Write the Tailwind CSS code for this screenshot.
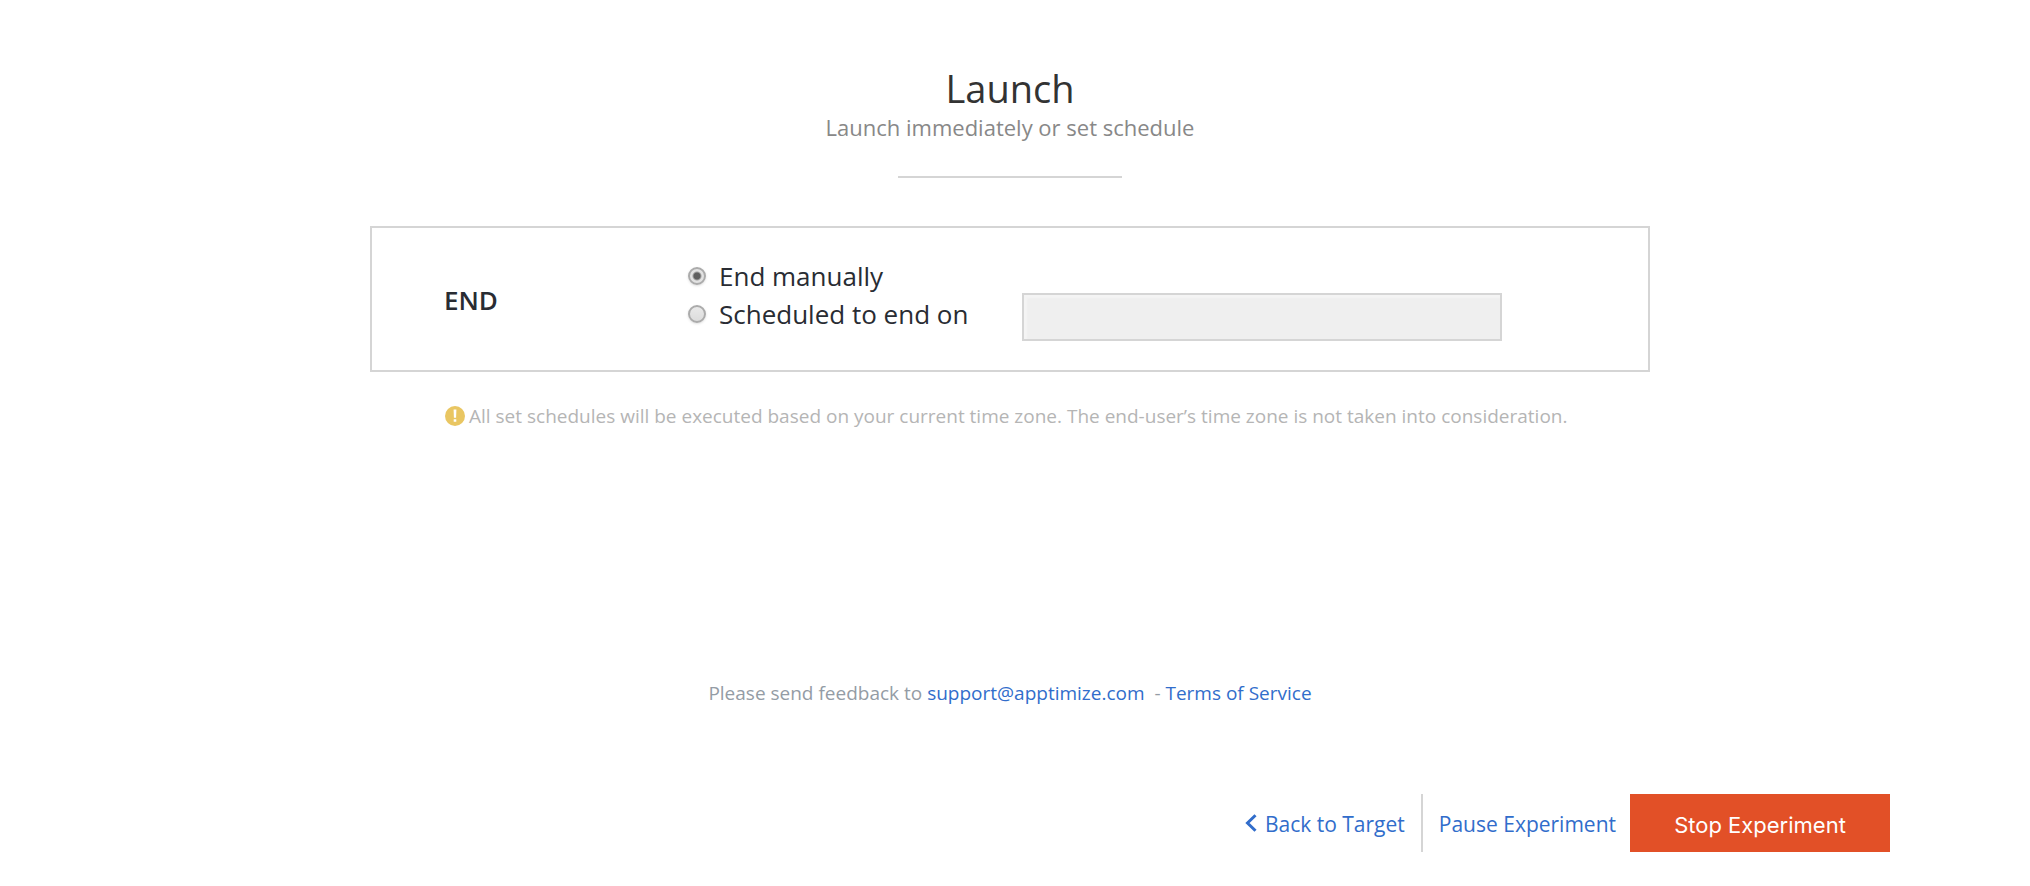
<!DOCTYPE html>
<html lang="en">
<head>
    <meta charset="UTF-8">
    <meta name="viewport" content="width=device-width, initial-scale=1.0">
    <title>Launch</title>
    <script src="https://cdn.jsdelivr.net/npm/@tailwindcss/browser@4"></script>
</head>
<body class="bg-white pr-[10px] font-['Open_Sans','Noto_Sans',sans-serif] text-[#292c33]">
    <main class="max-w-[1280px] mx-auto pt-[60px]">
        <header class="flex flex-col items-center text-center">
            <h1 class="text-[38px] leading-[56px] text-[#333333]">Launch</h1>
            <p class="text-[22px] leading-[22px] text-[#888888]">Launch immediately or set schedule</p>
            <hr class="mt-[38px] w-56 border-t-2 border-[#d5d5d5]">
        </header>

        <section class="mt-12 flex items-center border-2 border-[#d5d5d5] px-[72px] py-[29px]">
            <h2 class="w-[244px] pt-0.5 text-[26px] leading-[38px] font-semibold">END</h2>
            <form id="end-form" class="flex items-end">
                <div class="w-[334px] pb-2 text-[26px] leading-[38px]">
                    <div class="flex items-center">
                        <input type="radio" id="end-manual" name="end" checked class="size-[18px] appearance-none rounded-full border-2 border-[#ababab] bg-linear-to-b from-[#e9e9e9] to-[#dcdcdc] shadow-sm checked:bg-[radial-gradient(circle,#5f5f5f_3px,#e2e2e2_5px)]">
                        <label for="end-manual" class="pl-[13px]">End manually</label>
                    </div>
                    <div class="flex items-center">
                        <input type="radio" id="end-scheduled" name="end" class="size-[18px] appearance-none rounded-full border-2 border-[#ababab] bg-linear-to-b from-[#e9e9e9] to-[#dcdcdc] shadow-sm checked:bg-[radial-gradient(circle,#5f5f5f_3px,#e2e2e2_5px)]">
                        <label for="end-scheduled" class="pl-[13px]">Scheduled to end on</label>
                    </div>
                </div>
                <input type="text" id="end-date" aria-label="End date" disabled class="h-12 w-[480px] border-2 border-[#d5d5d5] bg-[#efefef] px-3 shadow-[inset_3px_3px_2px_#f4f4f4]">
            </form>
        </section>

        <p class="mt-7 flex items-center gap-1 pl-[75px] text-[19px] leading-8 text-[#b5b5b5]">
            <svg class="size-5 shrink-0" viewBox="0 0 20 20" aria-hidden="true">
                <circle cx="10" cy="10" r="10" fill="#e9c662"/>
                <path d="M8.6 3.6h2.8l-.3 8.2H8.9zM8.7 13.2h2.6v2.6H8.7z" fill="#fff"/>
            </svg>
            <span>All set schedules will be executed based on your current time zone. The end-user’s time zone is not taken into consideration.</span>
        </p>
    </main>

    <footer>
        <p class="mt-[245px] text-center text-[19px] leading-8 text-[#949ca5]">
            Please send feedback to <a href="mailto:support@apptimize.com" class="text-[#316dcb]">support@apptimize.com</a>&nbsp; - <a href="#" class="text-[#316dcb]">Terms of Service</a>
        </p>
        <nav class="mt-[85px] mr-[130px] flex h-[58px] items-stretch justify-end text-[21px] text-[#316dcb]">
            <a href="#" class="flex items-center border-r-2 border-[#d5d5d5] pt-1 pr-4">
                <svg class="mr-2 mb-1 h-[18px] w-3" viewBox="0 0 12 18" fill="none" stroke="#316dcb" stroke-width="3" aria-hidden="true">
                    <path d="M10.5 1.2L2.5 9l8 7.8"/>
                </svg>
                Back to Target
            </a>
            <button type="button" class="pt-1 pr-3.5 pl-4">Pause Experiment</button>
            <button type="button" class="w-[260px] bg-[#e25027] pt-1 font-['Inter',sans-serif] text-[22px] text-white">Stop Experiment</button>
        </nav>
    </footer>
</body>
</html>
